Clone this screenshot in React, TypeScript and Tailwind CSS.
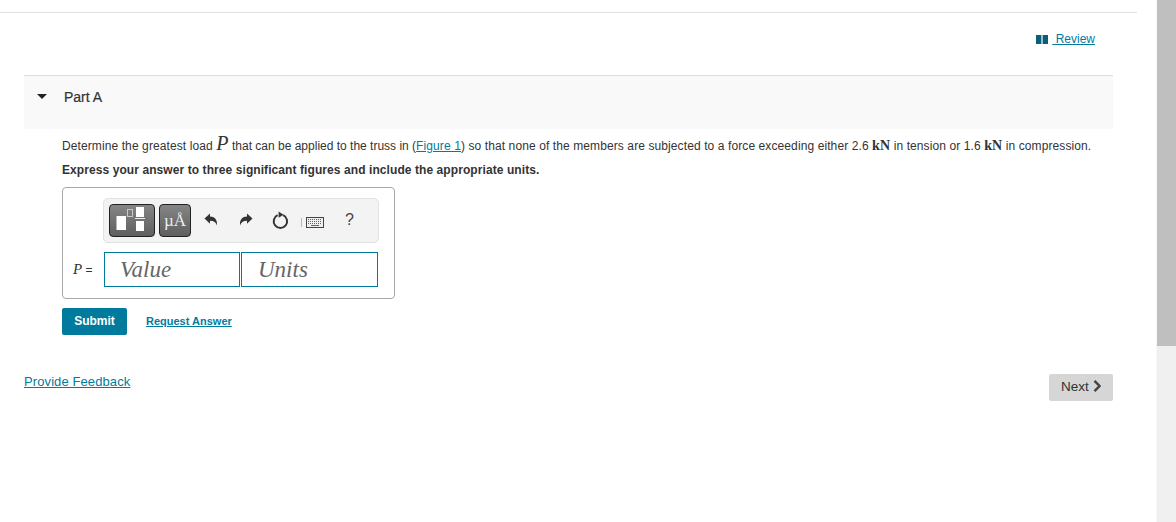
export default function App() {
  const sans = "font-['Liberation_Sans',Arial,sans-serif]";
  return (
    <div className={`flex h-[522px] w-[1176px] overflow-hidden bg-white text-[#333] ${sans}`}>
      <div className="w-[1137px] shrink-0 pt-3">
        <div className="h-[63px] border-t border-[#e0e0e0] pr-[42px] pt-[18px] flex justify-end">
          <a className="flex items-center h-4 text-xs text-[#007b9e] underline leading-4 whitespace-pre">
            <svg width="12" height="9" viewBox="0 0 12 9" className="mr-[4px] text-[#0a5f78]">
              <path d="M0 0h5.4v9H0zM6.6 0H12v9H6.6z" fill="currentColor" />
            </svg>
            <span> Review</span>
          </a>
        </div>
        <div className="ml-6 mr-6">
          <div className="h-[54px] border-t border-[#dcdcdc] bg-[#f9f9f9] flex items-start pt-[13px]">
            <svg width="10" height="5" viewBox="0 0 10 5" className="ml-[13px] mt-[5px] text-[#222]">
              <path d="M0 0h10L5 5z" fill="currentColor" />
            </svg>
            <span className="ml-[17px] text-[14px] leading-4 text-[#333]" style={{ WebkitTextStroke: "0.2px #333" }}>Part A</span>
          </div>
          <div className="pl-[38px]">
            <p className="mt-[5px] h-[18px] text-xs leading-[18px] tracking-[0.1px] whitespace-nowrap text-[#333]">
              Determine the greatest load <span className="font-['Liberation_Serif',serif] italic text-[20px] leading-[18px]">P</span> <span className="tracking-normal">that can be applied to the truss in (</span><a className="text-[#007b9e] underline">Figure 1</a>) so that none of the members are subjected to a force exceeding either 2.6 <span className="font-['Liberation_Serif',serif] font-bold text-[14px] leading-[18px]">kN</span> in tension or 1.6 <span className="font-['Liberation_Serif',serif] font-bold text-[14px] leading-[18px]">kN</span> in compression.
            </p>
            <p className="mt-[9px] h-[18px] text-xs leading-[18px] font-bold tracking-[0.08px] text-[#333]">
              Express your answer to three significant figures and include the appropriate units.
            </p>
            <div className="mt-[8px] w-[333px] h-[112px] rounded-[4px] border border-[#a8a8a8] flex flex-col pl-[40px] pt-[10px]">
              <div className="w-[276px] h-[45px] rounded-[5px] border border-[#e2e2e2] bg-[#f3f3f3] flex items-center pl-[5px] shrink-0">
                <button className="w-[46px] h-[33px] rounded-[4px] border border-[#222] bg-gradient-to-b from-[#858585] to-[#5f5f5f] relative shrink-0">
                  <svg width="44" height="31" viewBox="0 0 44 31" className="absolute left-0 top-0">
                    <rect x="6.5" y="11" width="9.5" height="14" fill="#fff" />
                    <rect x="17.5" y="4.5" width="5" height="7" fill="none" stroke="#c8c8c8" strokeWidth="1" />
                    <rect x="26" y="2" width="8" height="10" fill="#fff" />
                    <rect x="25" y="13" width="10" height="1" fill="#eee" />
                    <rect x="26" y="16" width="8" height="10" fill="#fff" />
                  </svg>
                </button>
                <button className="ml-[4px] w-[32px] h-[33px] rounded-[4px] border border-[#222] bg-gradient-to-b from-[#858585] to-[#5f5f5f] shrink-0 text-[#eee] font-['Liberation_Serif',serif] text-[17px] leading-[30px] text-center">
                  µÅ
                </button>
                <svg width="14" height="14" viewBox="0 0 14 14" className="ml-[13px] mt-[-1px] shrink-0 text-[#333]">
                  <path d="M0.5 5.5 6 0.5v3c4.5 0 7.5 2.8 7 9-1-3.2-3-4.8-7-4.8v3z" fill="currentColor" />
                </svg>
                <svg width="14" height="14" viewBox="0 0 14 14" className="ml-[21px] mt-[-1px] shrink-0 text-[#333]">
                  <path d="M13.5 5.5 8 0.5v3c-4.5 0-7.5 2.8-7 9 1-3.2 3-4.8 7-4.8v3z" fill="currentColor" />
                </svg>
                <svg width="17" height="18" viewBox="0 0 17 18" className="ml-[19px] mt-[-1px] shrink-0 text-[#333]">
                  <path d="M11.2 4.2A6.7 6.7 0 1 1 5.6 4.2" fill="none" stroke="currentColor" strokeWidth="2" />
                  <path d="M6.6 0.6 11.6 3.8 6.6 6.8z" fill="currentColor" />
                </svg>
                <span className="ml-[12px] mt-[4px] w-px h-[9px] bg-[#bbb] shrink-0" />
                <svg width="18" height="11" viewBox="0 0 18 11" className="ml-[4px] mt-[4px] shrink-0">
                  <rect x="0.5" y="0.5" width="17" height="10" fill="#eee" stroke="#444" />
                  <path d="M2 2.5h14M2 4.5h14M2 6.5h14" stroke="#666" strokeWidth="1" strokeDasharray="1 1" />
                  <path d="M5 8.5h8" stroke="#666" />
                </svg>
                <span className="ml-[21px] mt-[-1px] text-[16px] leading-[18px] text-[#444]">?</span>
              </div>
              <div className="flex items-center mt-[9px] -ml-[30px]">
                <span className="w-[31px] text-[12px] leading-[18px] whitespace-nowrap text-[#333]">
                  <span className="font-['Liberation_Serif',serif] italic text-[15px]">P</span> =
                </span>
                <div className="w-[136px] h-[35px] border border-[#007b9e] pl-[15px] font-['Liberation_Serif',serif] italic text-[23px] leading-[33px] text-[#666]">Value</div>
                <div className="ml-px w-[137px] h-[35px] border border-[#007b9e] pl-[16px] font-['Liberation_Serif',serif] italic text-[23px] leading-[33px] text-[#666]">Units</div>
              </div>
            </div>
            <div className="mt-[9px] flex items-center">
              <button className="w-[65px] h-[27px] rounded-[2px] bg-[#007b9e] text-white text-xs font-bold leading-[24px] pb-[2px]">Submit</button>
              <a className="ml-[19px] mt-[-1px] text-[11px] font-bold text-[#007b9e] underline leading-4">Request Answer</a>
            </div>
          </div>
          <div className="mt-[39px] flex items-start justify-between">
            <a className="mt-[-1px] text-[13px] text-[#007b9e] underline leading-[18px] tracking-[0.1px] whitespace-nowrap">Provide Feedback</a>
            <button className="w-16 h-[27px] rounded-[2px] bg-[#d6d6d6] text-[#333] text-[13.5px] leading-[24px] flex items-start pt-[1px] justify-center gap-[4px]">
              Next
              <svg width="8" height="12" viewBox="0 0 8 12" className="mt-[5px]"><path d="M1.5 0.8 6.5 6l-5 5.2" fill="none" stroke="#444" strokeWidth="2.4" /></svg>
            </button>
          </div>
        </div>
      </div>
      <div className="ml-[19px] w-5 bg-[#f0f0f0] shrink-0 border-l border-[#f7f7f7]">
        <div className="h-[346px] bg-[#bfbfbf]" />
      </div>
    </div>
  );
}
